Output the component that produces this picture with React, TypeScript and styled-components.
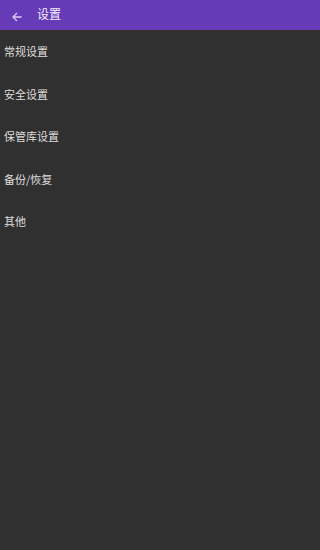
import styled, { createGlobalStyle } from "styled-components"

const Global = createGlobalStyle`
html, body {
  margin: 0;
  padding: 0;
  background: #303030;
  overflow: hidden;
}
`

const Page = styled.div`
display: flex;
flex-direction: column;
height: 100vh;
background: #303030;
font-family: "Noto Sans CJK SC", "Noto Sans", sans-serif;
`

const Toolbar = styled.div`
display: flex;
align-items: center;
height: 30px;
flex-shrink: 0;
background: #673ab7;
color: #ffffff;
`

const BackBtn = styled.button`
display: flex;
align-items: center;
justify-content: center;
width: 32px;
height: 30px;
padding: 0;
padding-left: 1px;
padding-top: 4px;
border: none;
background: transparent;
cursor: pointer;
`

const Svg = styled.svg`
width: 12px;
height: 12px;
`

const Title = styled.div`
margin-left: 5px;
margin-top: -3px;
font-size: 12px;
color: #f4f0fa;
`

const List = styled.div`
display: flex;
flex-direction: column;
`

const Item = styled.div`
display: flex;
align-items: center;
height: 42.5px;
padding-left: 4px;
font-size: 11px;
color: #dedede;
`

const items = ["常规设置", "安全设置", "保管库设置", "备份/恢复", "其他"]

const App = () => {
    return (
        <>
            <Global />
            <Page>
                <Toolbar>
                    <BackBtn>
                        <Svg viewBox="0 0 24 24">
                            <path fill="none" stroke="#d9ccf0" strokeWidth="2.6" strokeLinecap="square" d="M20 12H5M11 5l-7 7 7 7" />
                        </Svg>
                    </BackBtn>
                    <Title>设置</Title>
                </Toolbar>
                <List>
                    {items.map((item) => (
                        <Item key={item}>{item}</Item>
                    ))}
                </List>
            </Page>
        </>
    )
}

export default App
